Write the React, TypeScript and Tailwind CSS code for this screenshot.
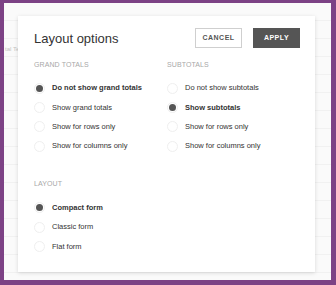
import React from 'react';

type Option = { label: string; checked?: boolean };

const grandTotals: Option[] = [
  { label: 'Do not show grand totals', checked: true },
  { label: 'Show grand totals' },
  { label: 'Show for rows only' },
  { label: 'Show for columns only' },
];

const subtotals: Option[] = [
  { label: 'Do not show subtotals' },
  { label: 'Show subtotals', checked: true },
  { label: 'Show for rows only' },
  { label: 'Show for columns only' },
];

const layouts: Option[] = [
  { label: 'Compact form', checked: true },
  { label: 'Classic form' },
  { label: 'Flat form' },
];

const Radio = ({ label, checked }: Option) => (
  <div className="flex items-center h-[19.3px] gap-[7px]">
    <span className="w-[11px] h-[11px] rounded-full border border-[#efefef] bg-white flex items-center justify-center shrink-0">
      {checked && <span className="w-[7px] h-[7px] rounded-full bg-[#555555]" />}
    </span>
    <span className={`text-[7.5px] leading-none text-[#333333] whitespace-nowrap ${checked ? 'font-bold' : ''}`}>
      {label}
    </span>
  </div>
);

const Group = ({ title, options }: { title: string; options: Option[] }) => (
  <div className="flex flex-col">
    <div className="h-[10px] flex items-center text-[7px] leading-none text-[#a8a8a8] tracking-[0.1px]">{title}</div>
    <div className="flex flex-col mt-[9.5px]">
      {options.map((o) => (
        <Radio key={o.label} {...o} />
      ))}
    </div>
  </div>
);

export default function App() {
  return (
    <div
      className="w-[336px] h-[285px] bg-[#7c4285] pt-[3px] pl-[4px] pr-[5px] pb-[5px]"
      style={{ fontFamily: '"Liberation Sans", Arial, sans-serif' }}
    >
      <div className="relative w-full h-full bg-[repeating-linear-gradient(to_bottom,#fafafa_0px,#fafafa_17px,#f1f1f1_17px,#f1f1f1_18px)] pt-[13px] pl-[14px]">
        <span className="absolute left-[1px] top-[42px] text-[6px] text-[#c4c4c4] whitespace-nowrap">tal Te</span>
        <div className="relative w-[297px] h-[256px] bg-white shadow-[0_1px_4px_rgba(0,0,0,0.14)] pl-[16px] pr-[15px] pt-[12px]">
          <div className="flex items-center h-[20px]">
            <div className="flex-1 text-[13px] leading-none text-[#333333]">Layout options</div>
            <button className="w-[47px] h-[20px] border border-[#cfcfcf] bg-white text-[7px] font-bold tracking-[0.5px] text-[#555555]">
              CANCEL
            </button>
            <button className="ml-[11px] w-[47px] h-[20px] bg-[#555555] text-[7px] font-bold tracking-[0.5px] text-white">
              APPLY
            </button>
          </div>
          <div className="grid grid-cols-[133px_1fr] mt-[11px]">
            <Group title="GRAND TOTALS" options={grandTotals} />
            <Group title="SUBTOTALS" options={subtotals} />
          </div>
          <div className="mt-[23px]">
            <Group title="LAYOUT" options={layouts} />
          </div>
        </div>
      </div>
    </div>
  );
}
